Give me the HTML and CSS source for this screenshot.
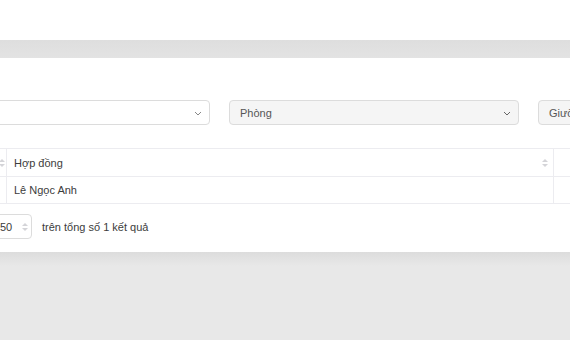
FILE: index.html
```html
<!DOCTYPE html>
<html lang="vi">
<head>
    <meta charset="UTF-8">
    <meta name="viewport" content="width=device-width, initial-scale=1.0">
    <title>Hợp đồng</title>
    <link rel="stylesheet" href="styles.css">
</head>
<body>
    <div class="topbar"></div>
    <div class="band"></div>

    <div class="card">
        <div class="inner">
            <!-- Filters -->
            <div class="filters">
                <div class="select">
                    <span class="select-text"></span>
                    <svg class="chevron" width="8" height="5" viewBox="0 0 8 5"><path d="M1 1l3 3 3-3" fill="none" stroke="#888" stroke-width="1"/></svg>
                </div>
                <div class="select disabled">
                    <span class="select-text">Phòng</span>
                    <svg class="chevron" width="8" height="5" viewBox="0 0 8 5"><path d="M1 1l3 3 3-3" fill="none" stroke="#666" stroke-width="1"/></svg>
                </div>
                <div class="select disabled">
                    <span class="select-text">Giường</span>
                    <svg class="chevron" width="8" height="5" viewBox="0 0 8 5"><path d="M1 1l3 3 3-3" fill="none" stroke="#666" stroke-width="1"/></svg>
                </div>
            </div>

            <!-- Table -->
            <table class="grid">
                <thead>
                    <tr>
                        <th class="col-a"><span class="sort"></span></th>
                        <th class="col-b">Hợp đồng <span class="sort"></span></th>
                        <th class="col-c"></th>
                    </tr>
                </thead>
                <tbody>
                    <tr>
                        <td class="col-a"></td>
                        <td class="col-b">Lê Ngọc Anh</td>
                        <td class="col-c"></td>
                    </tr>
                </tbody>
            </table>

            <!-- Pagination -->
            <div class="pager">
                <div class="page-size">50 <span class="sort"></span></div>
                <span class="total">trên tổng số 1 kết quả</span>
            </div>
        </div>
    </div>

    <div class="bottom"></div>
</body>
</html>
```

FILE: styles.css
```css
html, body {
    margin: 0;
    width: 570px;
    height: 340px;
    overflow: hidden;
    background: #e8e8e8;
    font-family: "Liberation Sans", Arial, sans-serif;
    font-size: 11px;
    color: #3c3c3c;
}
.topbar {
    height: 40px;
    background: #fff;
}
.band {
    height: 18px;
    background: linear-gradient(#dedede, #e3e3e3);
}
.card {
    height: 194px;
    background: #fff;
    overflow: hidden;
}
.inner {
    margin-left: -80px;
    width: 1000px;
    padding-top: 42px;
}
.filters {
    display: flex;
    gap: 19px;
}
.select {
    width: 290px;
    height: 25px;
    box-sizing: border-box;
    border: 1px solid #dcdcdc;
    border-radius: 4px;
    background: #fff;
    display: flex;
    align-items: center;
    justify-content: space-between;
    padding: 0 7px 0 10px;
}
.select.disabled {
    background: #f5f5f5;
    color: #555;
}
.chevron {
    margin-top: 1px;
}
.grid {
    margin-top: 23px;
    border-collapse: collapse;
    width: 1000px;
}
.grid th, .grid td {
    border-top: 1px solid #ececf0;
    border-bottom: 1px solid #ececf0;
    border-right: 1px solid #ececf0;
    text-align: left;
    font-weight: normal;
    padding: 0 7px;
}
.grid th {
    height: 27px;
}
.grid td {
    height: 26px;
}
.col-a {
    width: 72px;
    position: relative;
}
.col-b {
    width: 532px;
    position: relative;
}
.col-a .sort {
    position: absolute;
    right: 1px;
    top: 10px;
}
.col-b .sort {
    position: absolute;
    right: 5px;
    top: 10px;
}
.sort {
    display: inline-block;
    width: 6px;
    height: 8px;
    position: relative;
}
.sort::before, .sort::after {
    content: "";
    position: absolute;
    left: 0;
    border-left: 3px solid transparent;
    border-right: 3px solid transparent;
}
.sort::before {
    top: 0;
    border-bottom: 3px solid #d4d4d8;
}
.sort::after {
    bottom: 0;
    border-top: 3px solid #d4d4d8;
}
.pager {
    margin-top: 10px;
    display: flex;
    align-items: center;
    gap: 10px;
}
.page-size {
    margin-left: 70px;
    width: 42px;
    height: 25px;
    box-sizing: border-box;
    border: 1px solid #dcdcdc;
    border-radius: 4px;
    display: flex;
    align-items: center;
    padding-left: 9px;
    gap: 10px;
}
.page-size .sort {
    margin-top: 1px;
}
.bottom {
    height: 88px;
    background: linear-gradient(#dcdcdc, #e8e8e8 14px);
}
```
